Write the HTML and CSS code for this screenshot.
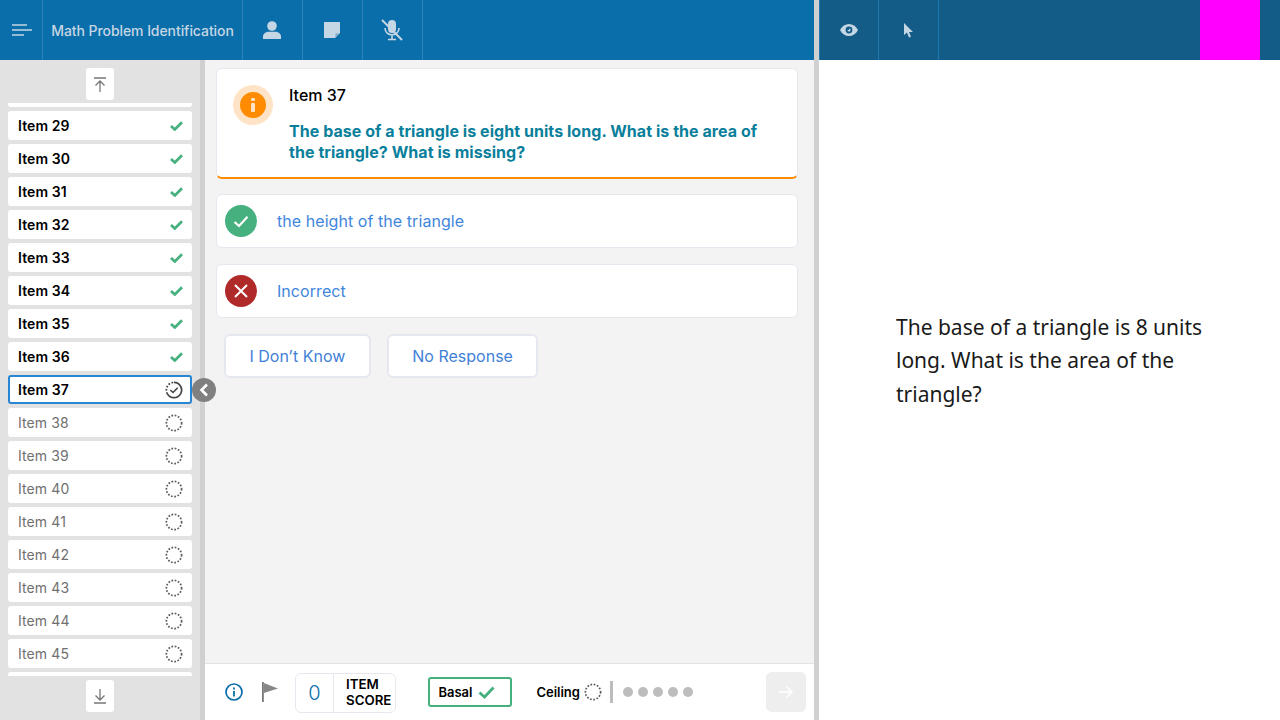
FILE: index.html
```html
<!DOCTYPE html>
<html lang="en">
<head>
  <meta charset="UTF-8" />
  <title>Math Problem Identification</title>
  <link rel="stylesheet" href="styles.css">
</head>
<body>
  <svg class="defs" width="0" height="0">
    <symbol id="tick" viewBox="0 0 13 10"><path d="M1 5 4.800 8.500 12 1.300" fill="none" stroke="currentColor" stroke-width="2.700"/></symbol>
    <symbol id="ring" viewBox="0 0 18 18"><circle cx="9" cy="9" r="7.600" fill="none" stroke="#5c5c5c" stroke-width="1.700" stroke-dasharray="1.700 1.600"/></symbol>
  </svg>

  <div class="app">
    <div class="left">
      <header class="topbar">
        <div class="cell menu">
          <svg width="20" height="12" viewBox="0 0 20 12"><path d="M0 1h15M0 6h20M0 11h12" stroke="#c5d6e4" stroke-width="1.600"/></svg>
        </div>
        <div class="cell title">Math Problem Identification</div>
        <div class="cell tool">
          <svg width="18" height="18" viewBox="0 0 18 18" fill="#c5d6e4"><circle cx="9" cy="5" r="4.800"/><path d="M0 18v-2.500C0 12.500 3 10.800 6 10.800h6c3 0 6 1.700 6 4.700V18z"/></svg>
        </div>
        <div class="cell tool">
          <svg width="16" height="16" viewBox="0 0 16 16"><path d="M0 0h16v11l-5 5H0z" fill="#c5d6e4"/><path d="M11.500 11.500H15L11.500 15z" fill="#7ba6c6"/></svg>
        </div>
        <div class="cell tool">
          <svg width="24" height="22" viewBox="0 0 24 22" fill="none" stroke="#c5d6e4"><rect x="8" y="1" width="8" height="13" rx="4" fill="#c5d6e4" stroke="none"/><path d="M5 9c0 9 14 9 14 0M12 16v4M8 20.500h8" stroke-width="1.600"/><path d="M2 1l20 20" stroke-width="2"/></svg>
        </div>
      </header>

      <div class="body">
        <aside class="sidebar">
          <button class="scroll-btn">
            <svg width="14" height="15" viewBox="0 0 14 15" fill="none" stroke="#777" stroke-width="1.300"><path d="M1 1h12M7 15V4M2.500 8.500 7 4l4.500 4.500"/></svg>
          </button>
          <div class="list">
            <div class="list-inner">
              <div class="item done"></div>
              <div class="item done">Item 29<svg class="tick"><use href="#tick"/></svg></div>
              <div class="item done">Item 30<svg class="tick"><use href="#tick"/></svg></div>
              <div class="item done">Item 31<svg class="tick"><use href="#tick"/></svg></div>
              <div class="item done">Item 32<svg class="tick"><use href="#tick"/></svg></div>
              <div class="item done">Item 33<svg class="tick"><use href="#tick"/></svg></div>
              <div class="item done">Item 34<svg class="tick"><use href="#tick"/></svg></div>
              <div class="item done">Item 35<svg class="tick"><use href="#tick"/></svg></div>
              <div class="item done">Item 36<svg class="tick"><use href="#tick"/></svg></div>
              <div class="item current">Item 37
                <svg class="ring" viewBox="0 0 18 18" fill="none" stroke="#444"><path d="M9 1.400A7.600 7.600 0 1 1 2.400 12.800" stroke-width="1.700"/><path d="M2.400 12.800A7.600 7.600 0 0 1 9 1.400" stroke-width="1.700" stroke-dasharray="1.700 1.600"/><path d="M5.300 9 8 11.500 12.700 6.800" stroke-width="1.600"/></svg>
              </div>
              <div class="item">Item 38<svg class="ring"><use href="#ring"/></svg></div>
              <div class="item">Item 39<svg class="ring"><use href="#ring"/></svg></div>
              <div class="item">Item 40<svg class="ring"><use href="#ring"/></svg></div>
              <div class="item">Item 41<svg class="ring"><use href="#ring"/></svg></div>
              <div class="item">Item 42<svg class="ring"><use href="#ring"/></svg></div>
              <div class="item">Item 43<svg class="ring"><use href="#ring"/></svg></div>
              <div class="item">Item 44<svg class="ring"><use href="#ring"/></svg></div>
              <div class="item">Item 45<svg class="ring"><use href="#ring"/></svg></div>
              <div class="item"></div>
            </div>
          </div>
          <button class="scroll-btn">
            <svg width="14" height="15" viewBox="0 0 14 15" fill="none" stroke="#777" stroke-width="1.300"><path d="M1 14h12M7 0v11M2.500 6.500 7 11l4.500-4.500"/></svg>
          </button>
          <span class="collapse">
            <svg width="10" height="14" viewBox="0 0 10 14" fill="none" stroke="#fff" stroke-width="2.600"><path d="M8 1.500 2.500 7 8 12.500"/></svg>
          </span>
        </aside>

        <main class="main">
          <div class="content">
            <section class="question">
              <span class="halo">
                <span class="info-dot">
                  <svg width="4" height="14" viewBox="0 0 4 14" fill="#ffe3c6"><rect width="4" height="3" rx="1"/><rect y="5" width="4" height="9" rx="1"/></svg>
                </span>
              </span>
              <div>
                <h2>Item 37</h2>
                <p>The base of a triangle is eight units long. What is the area of the triangle? What is missing?</p>
              </div>
            </section>

            <div class="answer">
              <span class="mark ok"><svg width="16" height="13" viewBox="0 0 16 13" fill="none" stroke="#fff" stroke-width="2.200"><path d="M1.500 7 6 11 14.500 1.800"/></svg></span>
              the height of the triangle
            </div>
            <div class="answer">
              <span class="mark bad"><svg width="14" height="14" viewBox="0 0 14 14" fill="none" stroke="#fff" stroke-width="2"><path d="M1 1l12 12M13 1 1 13"/></svg></span>
              Incorrect
            </div>

            <div class="choices">
              <button class="choice">I Don’t Know</button>
              <button class="choice">No Response</button>
            </div>
          </div>

          <footer class="footer">
            <svg class="info" width="18" height="18" viewBox="0 0 18 18" fill="none" stroke="#0a6eaa"><circle cx="9" cy="9" r="8" stroke-width="1.700"/><path d="M9 8v5.500" stroke-width="1.800"/><path d="M9 4.500v2" stroke-width="1.800"/></svg>
            <svg class="flag" width="16" height="20" viewBox="0 0 16 20"><path d="M0 0h1.800v20H0z" fill="#777"/><path d="M1.800 1 16 6.500 1.800 11z" fill="#888"/></svg>
            <div class="score">
              <span class="score-num">0</span>
              <span class="score-label">ITEM<br>SCORE</span>
            </div>
            <div class="basal">Basal
              <svg width="17" height="13" viewBox="0 0 17 13" fill="none" stroke="#46b07f" stroke-width="2.800"><path d="M1.500 6.500 6.500 11 15.500 1.500"/></svg>
            </div>
            <div class="ceiling">Ceiling<svg class="ring"><use href="#ring"/></svg></div>
            <span class="rule"></span>
            <div class="dots"><i></i><i></i><i></i><i></i><i></i></div>
            <button class="next">
              <svg width="14" height="14" viewBox="0 0 14 14" fill="none" stroke="#fff" stroke-width="1.500"><path d="M0 7h13M7.500 1.500 13 7l-5.500 5.500"/></svg>
            </button>
          </footer>
        </main>
      </div>
    </div>

    <div class="right">
      <header class="topbar dark">
        <div class="cell tool">
          <svg width="18" height="12" viewBox="0 0 18 12"><path d="M0 6c4-8 14-8 18 0-4 8-14 8-18 0z" fill="#c5d6e4"/><circle cx="9" cy="6" r="3.400" fill="#135c88"/><path d="M9 4.500a1.500 1.500 0 1 1-1.500 1.500H9z" fill="#c5d6e4"/></svg>
        </div>
        <div class="cell tool">
          <svg width="10" height="15" viewBox="0 0 10 15"><path d="M0 0v12l3-2.500L5 14.500l2-.8-2-4.700h4z" fill="#c5d6e4"/></svg>
        </div>
        <div class="magenta"></div>
      </header>
      <div class="reading">
        <p>The base of a triangle is 8 units long. What is the area of the triangle?</p>
      </div>
    </div>
  </div>
</body>
</html>
```

FILE: styles.css
```css
* {
  box-sizing: border-box;
}
html, body {
  margin: 0;
  height: 100%;
}
body {
  font-family: Inter, "Liberation Sans", sans-serif;
  color: #000;
  background: #fff;
  overflow: hidden;
}
button {
  font-family: inherit;
  cursor: pointer;
}
.defs {
  display: block;
  height: 0;
}
.app {
  display: flex;
  height: 720px;
}
.left {
  width: 814px;
  display: flex;
  flex-direction: column;
}
.right {
  flex: 1;
  border-left: 5px solid #d0d0d0;
  display: flex;
  flex-direction: column;
}

/* top bars */
.topbar {
  height: 60px;
  flex: none;
  display: flex;
  background: #0a6eaa;
  color: #c5d6e4;
}
.topbar.dark {
  background: #135c88;
  border-left: 1px solid #1f78b0;
}
.cell {
  display: flex;
  align-items: center;
  justify-content: center;
  border-right: 1px solid #2f82b6;
}
.dark .cell {
  border-right-color: #1f78b0;
}
.menu {
  width: 43px;
  padding-left: 2px;
}
.title {
  width: 200px;
  font-size: 14px;
  letter-spacing: -0.070px;
  font-weight: 500;
}
.tool {
  width: 60px;
  flex: none;
  padding-right: 2px;
}
.dark .tool {
  padding-right: 0;
}
.dark .tool:first-child {
  width: 59px;
}
.magenta {
  width: 60px;
  background: #f0f;
  margin-left: auto;
  margin-right: 20px;
}

.body {
  flex: 1;
  display: flex;
  min-height: 0;
}

/* item list */
.sidebar {
  position: relative;
  width: 205px;
  flex: none;
  background: #e2e2e2;
  border-right: 5px solid #d0d0d0;
  display: flex;
  flex-direction: column;
  align-items: center;
  padding: 8px 0 8px;
}
.scroll-btn {
  width: 28px;
  height: 32px;
  flex: none;
  border: none;
  border-radius: 3px;
  background: #fff;
  display: flex;
  align-items: center;
  justify-content: center;
  padding: 0;
}
.list {
  flex: 1;
  width: 100%;
  margin: 3px 0 4px;
  overflow: hidden;
  min-height: 0;
}
.list-inner {
  margin-top: -25px;
  padding: 0 8px;
  display: flex;
  flex-direction: column;
  gap: 4px;
}
.item {
  height: 29px;
  flex: none;
  display: flex;
  align-items: center;
  justify-content: space-between;
  padding: 0 9px 0 10px;
  background: #fff;
  border-radius: 3px;
  font-size: 14px;
  letter-spacing: 0.100px;
  color: #707070;
}
.done, .current {
  color: #000;
  font-weight: 600;
}
.current {
  border: 2px solid #2a85d5;
  padding: 0 7px 0 8px;
}
.tick {
  width: 13px;
  height: 10px;
  color: #46b07f;
}
.ring {
  width: 18px;
  height: 18px;
  flex: none;
}
.collapse {
  position: absolute;
  left: 192px;
  top: 318px;
  width: 24px;
  height: 24px;
  border-radius: 50%;
  background: #808080;
  display: flex;
  align-items: center;
  justify-content: center;
}

/* main column */
.main {
  flex: 1;
  display: flex;
  flex-direction: column;
  background: #f3f3f4;
  min-width: 0;
}
.content {
  flex: 1;
  padding: 8px 16px 0 11px;
}
.question {
  display: flex;
  gap: 16px;
  height: 111px;
  padding: 16px 16px 0 16px;
  background: #fff;
  border: 1px solid #e6e8f0;
  border-bottom: 2px solid #ff8c00;
  border-radius: 6px;
}
.halo {
  width: 40px;
  height: 40px;
  flex: none;
  border-radius: 50%;
  background: #ffe3c6;
  display: flex;
  align-items: center;
  justify-content: center;
}
.info-dot {
  width: 26px;
  height: 26px;
  border-radius: 50%;
  background: #ff8c00;
  display: flex;
  align-items: center;
  justify-content: center;
}
.question h2 {
  margin: 0;
  font-size: 16px;
  font-weight: 500;
  line-height: 20px;
}
.question p {
  margin: 16px 0 0;
  font-size: 16px;
  font-weight: 700;
  letter-spacing: 0.050px;
  line-height: 20.800px;
  color: #0a7f9c;
}
.answer {
  display: flex;
  align-items: center;
  gap: 20px;
  height: 54px;
  margin-top: 16px;
  padding-left: 8px;
  background: #fff;
  border: 1px solid #e6e8f0;
  border-radius: 6px;
  font-size: 16px;
  letter-spacing: 0.060px;
  color: #3f86dc;
}
.question + .answer {
  margin-top: 15px;
}
.mark {
  width: 32px;
  height: 32px;
  flex: none;
  border-radius: 50%;
  display: flex;
  align-items: center;
  justify-content: center;
}
.ok {
  background: #46b07f;
}
.bad {
  background: #b02a2a;
}
.choices {
  display: flex;
  gap: 16px;
  margin: 16px 0 0 8px;
}
.choice {
  height: 44px;
  padding: 0 23.500px;
  background: #fff;
  border: 2px solid #e6e8f0;
  border-radius: 6px;
  font-size: 16px;
  color: #3f7fd8;
}

/* bottom bar */
.footer {
  height: 57px;
  flex: none;
  display: flex;
  align-items: center;
  padding: 0 8px 0 20px;
  background: #fff;
  border-top: 1px solid #e2e2e2;
}
.flag {
  margin-left: 19px;
}
.score {
  display: flex;
  height: 40px;
  margin-left: 17px;
  border: 1px solid #e6e8f0;
  border-radius: 6px;
  margin-top: 2px;
}
.score-num {
  width: 38px;
  display: flex;
  align-items: center;
  justify-content: center;
  border-right: 1px solid #e6e8f0;
  font-size: 20px;
  font-weight: 300;
  color: #0a6eaa;
}
.score-label {
  padding: 2px 4px 0 12px;
  font-size: 13.300px;
  font-weight: 600;
  line-height: 16px;
}
.basal {
  display: flex;
  align-items: center;
  gap: 6px;
  width: 84px;
  height: 30px;
  margin-left: 32px;
  padding-left: 8px;
  border: 2px solid #46b07f;
  border-radius: 3px;
  font-size: 13px;
  font-weight: 600;
}
.ceiling {
  display: flex;
  align-items: center;
  gap: 4px;
  margin-left: 24px;
  font-size: 13px;
  font-weight: 600;
}
.rule {
  width: 3px;
  height: 22px;
  margin-left: 8px;
  background: #bdbdbd;
}
.dots {
  display: flex;
  gap: 5px;
  margin-left: 10px;
}
.dots i {
  width: 10px;
  height: 10px;
  border-radius: 50%;
  background: #bdbdbd;
}
.next {
  width: 40px;
  height: 40px;
  margin-left: auto;
  padding: 0;
  border: none;
  border-radius: 6px;
  background: #eee;
  display: flex;
  align-items: center;
  justify-content: center;
}

/* reading passage */
.reading {
  flex: 1;
  display: flex;
  align-items: center;
  padding: 0 77px 58px;
}
.reading p {
  margin: 0;
  font-family: "Noto Sans", sans-serif;
  font-size: 21px;
  line-height: 33.500px;
  color: #1a1a1a;
}
```
